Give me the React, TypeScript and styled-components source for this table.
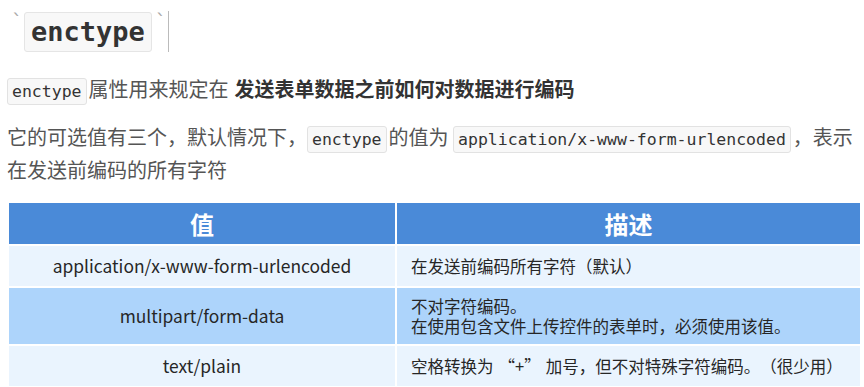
import React from 'react';
import styled, { createGlobalStyle } from 'styled-components';

const GlobalStyle = createGlobalStyle`
  html, body {
    margin: 0;
    padding: 0;
    background: #ffffff;
  }
  body {
    font-family: "Noto Sans CJK SC", "Noto Sans", sans-serif;
    color: #444;
    text-spacing-trim: space-all;
  }
`;

const Page = styled.div`
  width: 864px;
  height: 387px;
  overflow: hidden;
  box-sizing: border-box;
  padding: 0 4px 0 7px;
`;

const Heading = styled.h2`
  margin: 0;
  padding-top: 11px;
  height: 41px;
  display: flex;
  align-items: center;
  box-sizing: content-box;
`;

const Tick = styled.span<{ $lead?: boolean }>`
  font-family: "DejaVu Sans Mono", monospace;
  font-size: 20px;
  color: #aaa;
  font-weight: normal;
  align-self: flex-start;
  margin: -2px 0 0 ${p => (p.$lead ? 4 : 3)}px;
  width: 11px;
`;

const Cursor = styled.span`
  width: 0;
  height: 41px;
  border-left: 1px solid #bbb;
  margin-left: 2px;
`;

const HeadCode = styled.code`
  font-family: "DejaVu Sans Mono", monospace;
  font-size: 27px;
  font-weight: bold;
  color: #333;
  background: #f8f8f8;
  border: 1px solid #e5e5e5;
  border-radius: 3px;
  height: 40px;
  box-sizing: border-box;
  display: inline-flex;
  align-items: center;
  padding: 0 6px;
  margin-left: 2px;
`;

const Para = styled.p<{ $top: number }>`
  margin: ${p => p.$top}px 0 0 0;
  font-size: 20px;
  line-height: 33px;
  color: #555;
  word-break: break-all;
`;

const Code = styled.code`
  display: inline-block;
  font-family: "DejaVu Sans Mono", monospace;
  font-size: 16.5px;
  line-height: 17px;
  color: #333;
  background: #f8f8f8;
  border: 1px solid #e2e2e2;
  border-radius: 3px;
  padding: 4px 4px;
  margin: 0 2px 0 0;
`;

const Strong = styled.strong`
  color: #333;
  font-weight: bold;
  margin-left: 6px;
`;

const Table = styled.div`
  margin: 17px 0 0 2px;
  width: 851px;
  display: grid;
  grid-template-columns: 386px 1fr;
  column-gap: 2px;
  row-gap: 2px;
  font-family: "Noto Sans CJK SC", "Noto Sans", sans-serif;
  color: #262626;
`;

const HeadCell = styled.div`
  background: #4a8ad8;
  color: #fff;
  font-weight: bold;
  font-size: 24px;
  height: 41px;
  display: flex;
  align-items: center;
  justify-content: center;
`;

const Cell = styled.div<{ $dark?: boolean; $h: number; $left?: boolean }>`
  background: ${p => (p.$dark ? '#add4fb' : '#eaf4fe')};
  height: ${p => p.$h}px;
  display: flex;
  flex-direction: column;
  justify-content: center;
  align-items: ${p => (p.$left ? 'flex-start' : 'center')};
  padding-left: ${p => (p.$left ? 14 : 0)}px;
  font-size: ${p => (p.$left ? 16.5 : 17.4)}px;
  line-height: 20px;
`;

const Quote = styled.span`
  margin: 0 5px;
`;

const rows = [
  { value: 'application/x-www-form-urlencoded', desc: ['在发送前编码所有字符（默认）'], h: 40, dark: false },
  { value: 'multipart/form-data', desc: ['不对字符编码。', '在使用包含文件上传控件的表单时，必须使用该值。'], h: 56, dark: true },
];

export default function App() {
  return (
    <Page>
      <GlobalStyle />
      <Heading>
        <Tick $lead>`</Tick>
        <HeadCode>enctype</HeadCode>
        <Tick>`</Tick>
        <Cursor />
      </Heading>
      <Para $top={20}>
        <Code>enctype</Code>属性用来规定在<Strong>发送表单数据之前如何对数据进行编码</Strong>
      </Para>
      <Para $top={15}>
        它的可选值有三个，默认情况下，<Code>enctype</Code>的值为 <Code>application/x-www-form-urlencoded</Code>，表示在发送前编码的所有字符
      </Para>
      <Table>
        <HeadCell>值</HeadCell>
        <HeadCell>描述</HeadCell>
        {rows.map(r => (
          <React.Fragment key={r.value}>
            <Cell $dark={r.dark} $h={r.h}>{r.value}</Cell>
            <Cell $dark={r.dark} $h={r.h} $left>
              {r.desc.map(d => (
                <span key={d}>{d}</span>
              ))}
            </Cell>
          </React.Fragment>
        ))}
        <Cell $h={40}>text/plain</Cell>
        <Cell $h={40} $left>
          <span>
            空格转换为<Quote>“+”</Quote>加号，但不对特殊字符编码。（很少用）
          </span>
        </Cell>
      </Table>
    </Page>
  );
}
